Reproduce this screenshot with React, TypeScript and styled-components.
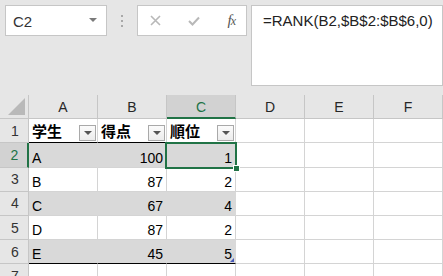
import React from 'react';
import styled, { createGlobalStyle } from 'styled-components';

const GlobalStyle = createGlobalStyle`
  html, body {
    margin: 0;
    padding: 0;
    width: 443px;
    height: 276px;
    overflow: hidden;
    background: #ffffff;
    font-family: "Liberation Sans", "Noto Sans CJK JP", sans-serif;
  }
`;

const Page = styled.div`
  width: 443px;
  height: 276px;
  overflow: hidden;
  display: flex;
  flex-direction: column;
`;

const TopBar = styled.div`
  height: 95px;
  flex: none;
  background: #e6e6e6;
  display: flex;
  align-items: flex-start;
  padding: 5px 0 0 5px;
  box-sizing: border-box;
`;

const NameBox = styled.div`
  width: 102px;
  height: 31px;
  box-sizing: border-box;
  border: 1px solid #c6c6c6;
  background: #fff;
  display: flex;
  align-items: center;
  justify-content: space-between;
  padding: 1px 9px 0 7px;
  font-size: 15px;
  color: #333;
`;

const NameArrow = styled.span`
  width: 0;
  height: 0;
  border-left: 4px solid transparent;
  border-right: 4px solid transparent;
  border-top: 4px solid #7a7a7a;
  margin-bottom: 3px;
`;

const Grip = styled.div`
  width: 30px;
  height: 31px;
  display: flex;
  flex-direction: column;
  align-items: center;
  justify-content: center;
  gap: 3px;
`;

const Dot = styled.span`
  width: 2px;
  height: 2px;
  background: #a8a8a8;
`;

const FxBox = styled.div`
  width: 110px;
  height: 31px;
  box-sizing: border-box;
  border: 1px solid #c6c6c6;
  background: #fff;
  display: flex;
  align-items: center;
  justify-content: space-between;
  padding: 0 11px 0 12px;
`;

const FxLabel = styled.span`
  font-family: "Liberation Serif", serif;
  font-style: italic;
  font-size: 15px;
  color: #555;
  letter-spacing: -1px;

  & small {
    font-size: 12px;
  }
`;

const FormulaBox = styled.div`
  flex: 1;
  height: 81px;
  margin-left: 4px;
  box-sizing: border-box;
  border: 1px solid #c6c6c6;
  background: #fff;
  padding: 6px 0 0 11px;
  font-size: 15px;
  line-height: 18px;
  color: #222;
`;

const Sheet = styled.div`
  display: grid;
  grid-template-columns: 29px repeat(6, 69px);
  grid-auto-rows: 24.2px;
`;

const Corner = styled.div`
  position: relative;
  background: #e6e6e6;
  border-right: 1px solid #c6c6c6;
  border-bottom: 1px solid #c6c6c6;
  box-sizing: border-box;

  &::after {
    content: '';
    position: absolute;
    right: 3px;
    bottom: 3px;
    width: 0;
    height: 0;
    border-left: 17px solid transparent;
    border-bottom: 17px solid #b9b9b9;
  }
`;

const ColHead = styled.div<{ $active?: boolean }>`
  box-sizing: border-box;
  background: ${p => (p.$active ? '#d2d2d2' : '#e6e6e6')};
  border-right: 1px solid #c6c6c6;
  border-bottom: ${p => (p.$active ? '2px solid #217346' : '1px solid #c6c6c6')};
  display: flex;
  align-items: center;
  justify-content: center;
  padding-top: ${p => (p.$active ? '1px' : '0')};
  font-size: 14px;
  color: ${p => (p.$active ? '#217346' : '#262626')};
`;

const RowHead = styled.div<{ $active?: boolean }>`
  box-sizing: border-box;
  background: ${p => (p.$active ? '#d2d2d2' : '#e6e6e6')};
  border-right: ${p => (p.$active ? '2px solid #217346' : '1px solid #c6c6c6')};
  border-bottom: 1px solid #c6c6c6;
  display: flex;
  align-items: center;
  justify-content: center;
  padding-left: 2px;
  font-size: 14px;
  color: ${p => (p.$active ? '#217346' : '#333')};
`;

const Cell = styled.div<{
  $band?: boolean;
  $right?: boolean;
  $head?: boolean;
  $rule?: boolean;
  $selected?: boolean;
}>`
  position: relative;
  box-sizing: border-box;
  background: ${p => (p.$band ? '#d9d9d9' : '#fff')};
  border-right: 1px solid ${p => (p.$band ? '#d9d9d9' : '#d4d4d4')};
  border-bottom: 1px solid ${p => (p.$rule ? '#000' : '#d4d4d4')};
  display: flex;
  align-items: flex-end;
  justify-content: ${p => (p.$right ? 'flex-end' : 'flex-start')};
  padding: 0 3px 1px 3px;
  line-height: 16px;
  color: #000;
  font-size: ${p => (p.$head ? '15px' : '14px')};
  font-weight: ${p => (p.$head ? 700 : 400)};
  padding-bottom: ${p => (p.$head ? '2px' : '1px')};

  ${p =>
    p.$selected &&
    `
    &::before {
      content: '';
      position: absolute;
      left: -2px;
      top: -1px;
      right: -2px;
      bottom: -2px;
      border: 2px solid #217346;
      z-index: 2;
    }
    &::after {
      content: '';
      position: absolute;
      right: -5px;
      bottom: -5px;
      width: 5px;
      height: 5px;
      background: #217346;
      border: 1px solid #fff;
      z-index: 3;
    }
  `}
`;

const ResizeMark = styled.span`
  position: absolute;
  right: 1px;
  bottom: 1px;
  width: 0;
  height: 0;
  border-left: 4px solid transparent;
  border-bottom: 4px solid #4658b8;
`;

const FilterBtn = styled.span`
  position: absolute;
  right: 1px;
  bottom: 1px;
  width: 17px;
  height: 16px;
  box-sizing: border-box;
  border: 1px solid #a9a9a9;
  background: linear-gradient(#fbfbfb, #ececec);
  display: flex;
  align-items: center;
  justify-content: center;

  &::after {
    content: '';
    width: 0;
    height: 0;
    border-left: 4px solid transparent;
    border-right: 4px solid transparent;
    border-top: 4px solid #555;
  }
`;

const columns = ['A', 'B', 'C', 'D', 'E', 'F'];
const headers = ['学生', '得点', '順位'];
const rows: [string, number, number][] = [
  ['A', 100, 1],
  ['B', 87, 2],
  ['C', 67, 4],
  ['D', 87, 2],
  ['E', 45, 5],
];

export default function App() {
  return (
    <Page>
      <GlobalStyle />
      <TopBar>
        <NameBox>
          <span>C2</span>
          <NameArrow />
        </NameBox>
        <Grip>
          <Dot />
          <Dot />
          <Dot />
        </Grip>
        <FxBox>
          <svg width="11" height="11" viewBox="0 0 11 11">
            <path d="M1 1 L10 10 M10 1 L1 10" stroke="#b8b8b8" strokeWidth="1.6" fill="none" />
          </svg>
          <svg width="12" height="10" viewBox="0 0 12 10">
            <path d="M1 5 L4.5 8.5 L11 1.5" stroke="#b8b8b8" strokeWidth="2" fill="none" />
          </svg>
          <FxLabel>
            f<small>x</small>
          </FxLabel>
        </FxBox>
        <FormulaBox>=RANK(B2,$B$2:$B$6,0)</FormulaBox>
      </TopBar>
      <Sheet>
        <Corner />
        {columns.map(c => (
          <ColHead key={c} $active={c === 'C'}>
            {c}
          </ColHead>
        ))}

        <RowHead>1</RowHead>
        {headers.map(h => (
          <Cell key={h} $head $rule>
            {h}
            <FilterBtn />
          </Cell>
        ))}
        <Cell />
        <Cell />
        <Cell />

        {rows.map((r, i) => {
          const band = i % 2 === 0;
          const last = i === rows.length - 1;
          return (
            <React.Fragment key={r[0]}>
              <RowHead $active={i === 0}>{i + 2}</RowHead>
              <Cell $band={band} $rule={last}>
                {r[0]}
              </Cell>
              <Cell $band={band} $rule={last} $right>
                {r[1]}
              </Cell>
              <Cell $band={band} $rule={last} $right $selected={i === 0}>
                {r[2]}
                {last && <ResizeMark />}
              </Cell>
              <Cell />
              <Cell />
              <Cell />
            </React.Fragment>
          );
        })}

        <RowHead>7</RowHead>
        <Cell />
        <Cell />
        <Cell />
        <Cell />
        <Cell />
        <Cell />
      </Sheet>
    </Page>
  );
}
